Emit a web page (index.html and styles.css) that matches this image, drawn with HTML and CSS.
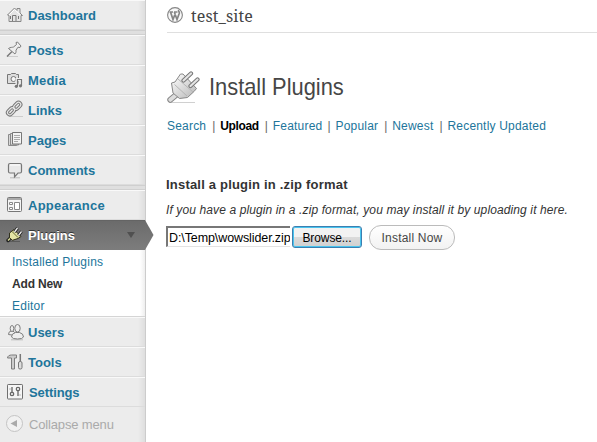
FILE: index.html
```html
<!DOCTYPE html>
<html lang="en">
<head>
<meta charset="utf-8">
<title>Install Plugins</title>
<link rel="stylesheet" href="styles.css">
</head>
<body>
<div class="layout">
  <nav class="sidebar">
    <a class="item"><svg class="icon" viewBox="0 0 28 30"><path d="M7.500 15 14.500 8l2.500 2.500V8.500h3v4.500l2.500 2.500H21V21.500H9V15.500z" fill="#e4e4e4" stroke="#888"/><path d="M9 15l5.500-5.500 6 5.500" fill="none" stroke="#fff"/><path d="M12.500 21v-5.500h3.500V21M18.500 16v3M10.500 16v3" fill="none" stroke="#777"/></svg><span>Dashboard</span></a>
    <div class="separator"></div>
    <a class="item"><svg class="icon" viewBox="0 0 28 30"><path d="M7 21.500h11" stroke="#ccc"/><path d="M7 21.500 12 16.500" stroke="#777" stroke-width="1.500"/><path d="M8.500 13.500c2-1.500 4-1 5-1.500l3-2.500-.5-2 1.500-.5 3.500 4-1 1.500-2-.3-2 3c.3 2-.5 3.500-1 3.800z" fill="#eee" stroke="#7d7d7d"/></svg><span>Posts</span></a>
    <a class="item media"><svg class="icon" viewBox="0 0 28 30"><path d="M7.500 9.500h3l1-1h4l1 1h2v9h-11z" fill="#ddd" stroke="#777"/><circle cx="13.500" cy="14" r="2.500" fill="#f6f6f6" stroke="#777"/><path d="M17 21.500V14.500h4.500v6.500" fill="none" stroke="#efefef" stroke-width="3"/><path d="M17.500 21.500V14.500h4v6.500" fill="none" stroke="#777" stroke-width="1.200"/><circle cx="16.300" cy="21.300" r="1.600" fill="#777"/><circle cx="20.500" cy="20.800" r="1.600" fill="#777"/></svg><span>Media</span></a>
    <a class="item"><svg class="icon" viewBox="0 0 28 30"><path d="M10 21.500h13" stroke="#ccc"/><g fill="none" stroke="#777" stroke-width="3.200"><rect x="-4" y="-2.300" width="8" height="4.600" rx="2.300" transform="translate(17.300 10.800) rotate(-45)"/><rect x="-4" y="-2.300" width="8" height="4.600" rx="2.300" transform="translate(11 16.300) rotate(-45)"/></g><g fill="none" stroke="#e6e6e6" stroke-width="1.200"><rect x="-4" y="-2.300" width="8" height="4.600" rx="2.300" transform="translate(17.300 10.800) rotate(-45)"/><rect x="-4" y="-2.300" width="8" height="4.600" rx="2.300" transform="translate(11 16.300) rotate(-45)"/></g></svg><span>Links</span></a>
    <a class="item"><svg class="icon" viewBox="0 0 28 30"><path d="M8.500 9.500h8v11h-8z" fill="#d8d8d8" stroke="#8a8a8a"/><path d="M10.500 8.500h8v11.500h-8z" fill="#ddd" stroke="#8a8a8a"/><path d="M12.500 7.500h9v11.500h-9z" fill="#f4f4f4" stroke="#777"/><path d="M14 10.500h6M14 12.500h6M14 14.500h6M14 16.500h4" stroke="#aaa"/></svg><span>Pages</span></a>
    <a class="item"><svg class="icon" viewBox="0 0 28 30"><path d="M10 22.800h10" stroke="#bbb"/><path d="M10 8.500h10q1.500 0 1.500 1.500v6.500q0 1.500-1.500 1.500h-2l-3.500 4v-4H10q-1.500 0-1.500-1.500V10q0-1.500 1.500-1.500z" fill="#e9e9e9" stroke="#777" stroke-width="1.200"/><path d="M10 10h10" stroke="#fff"/></svg><span>Comments</span></a>
    <div class="separator"></div>
    <a class="item appearance"><svg class="icon" viewBox="0 0 28 30"><rect x="7.500" y="7.500" width="14" height="14" rx="1" fill="#f5f5f5" stroke="#777"/><path d="M8 9h13" stroke="#aaa" stroke-width="2"/><path d="M9.500 12.500h3v2h-3zM9.500 17.500h3v2h-3zM14.500 12.500h5v7h-5z" fill="#fff" stroke="#888"/></svg><span>Appearance</span></a>
    <a class="item current"><svg class="icon" viewBox="0 0 28 30"><path d="M7 21.500h13" stroke="#5b5b5b"/><path d="M8 20.500 10.500 18" stroke="#222" stroke-width="3.500" stroke-linecap="round"/><path d="M8 20.500 11 17.500" stroke="#dde09a" stroke-width="1.500"/><path d="M9.500 13 14 9.500l7 7-3 2-5.500 1.800-3-2.500z" fill="#e4e6a5" stroke="#30301c"/><path d="M12 11.500 18 17.500" stroke="#666a35"/><path d="M14.500 12 17.500 8M18.500 15.500 21.500 11.500" stroke="#222" stroke-width="3"/><path d="M14.500 12 17.500 8M18.500 15.500 21.500 11.500" stroke="#eee" stroke-width="1.300"/></svg><span>Plugins</span><i class="toggle"></i><svg class="pointer" viewBox="0 0 9 30"><defs><linearGradient id="pg" x1="0" y1="0" x2="0" y2="1"><stop stop-color="#6b6b6b"/><stop offset="1" stop-color="#7c7c7c"/></linearGradient></defs><path d="M0 0 8.500 15 0 30z" fill="url(#pg)"/></svg></a>
    <div class="submenu"><a>Installed Plugins</a><a class="active">Add New</a><a class="editor">Editor</a></div>
    <a class="item"><svg class="icon" viewBox="0 0 28 30"><path d="M11 22.800h12" stroke="#bbb"/><g fill="#eee" stroke="#7d7d7d"><path d="M8.500 17.500q0-3 2.500-3.500h2q2.500 1 2 4.500z"/><ellipse cx="12" cy="11.500" rx="1.800" ry="3"/><ellipse cx="17.500" cy="11.300" rx="2.700" ry="3.800"/><path d="M11.500 20q0-3.500 4-4.500h4q4 1 4 4.500-1 2-6 2t-6-2z"/></g></svg><span>Users</span></a>
    <a class="item"><svg class="icon" viewBox="0 0 28 30"><path d="M7.500 11c0-2 2-3 4-3h5v3h-2v11h-3V11H9z" fill="#ccc" stroke="#7d7d7d"/><path d="M20.300 7v8" stroke="#777" stroke-width="1.500"/><rect x="18.500" y="14.500" width="3.500" height="7.500" rx="1.500" fill="#ddd" stroke="#777"/></svg><span>Tools</span></a>
    <a class="item settings"><svg class="icon" viewBox="0 0 28 30"><rect x="7.500" y="7.500" width="15" height="14.500" rx=".7" fill="#f5f5f5" stroke="#6f6f6f"/><path d="M12 10v5M18 13v6" stroke="#777" stroke-width="1.500"/><circle cx="12" cy="17" r="1.700" fill="none" stroke="#666" stroke-width="1.300"/><circle cx="18" cy="12" r="1.700" fill="#fff" stroke="#666" stroke-width="1.300"/><path d="M10 11v2M20 17v2" stroke="#bbb"/></svg><span>Settings</span></a>
    <a class="collapse"><svg class="icon" viewBox="0 0 28 30"><circle cx="14.500" cy="16.500" r="8" fill="#f1f1f1" stroke="#c4c4c4"/><path d="M10.500 16.500 17 13v7z" fill="#aaa"/></svg><span>Collapse menu</span></a>
  </nav>
  <main class="main">
    <header class="site"><svg class="wp" viewBox="0 0 16 16"><circle cx="8" cy="8" r="7.400" fill="#f8f8f8" stroke="#858585" stroke-width="1.100"/><path d="M2.500 5h3.500M7 5h3.500M3.500 5 6 12.500 8.300 6.500M7.300 5l2.700 7.500 2.300-6.300c.4-1.600-1.300-2-.6-3.200" fill="none" stroke="#858585" stroke-width="1.700"/></svg><span>test_site</span></header>
    <div class="title">
      <svg class="plug" viewBox="0 0 34 34"><defs><linearGradient id="g" x1="0" y1="0" x2="1" y2="1"><stop stop-color="#fff"/><stop offset="1" stop-color="#b5b5b5"/></linearGradient></defs><path d="M4 31.500h24" stroke="#d0d0d0"/><path d="M3.300 28.800 9 24" stroke="#888" stroke-width="6" stroke-linecap="round"/><path d="M3.300 28.800 9 24" stroke="#ddd" stroke-width="4" stroke-linecap="round"/><path d="M4.500 12 8 11 13.500 3 16 3 29.500 17.500 27 20.500 20.500 26.500 12.500 27.500 6 22z" fill="url(#g)" stroke="#888"/><path d="M7.500 13.500 20 25M11 8 26 21" fill="none" stroke="#b5b5b5"/><path d="M16.500 9.500 24 2.500M23.500 15 30.500 8.500" stroke="#777" stroke-width="4.200" stroke-linecap="round"/><path d="M16.500 9.500 24 2.500M23.500 15 30.500 8.500" stroke="#e4e4e4" stroke-width="2.200" stroke-linecap="round"/></svg>
      <h1>Install Plugins</h1>
    </div>
    <div class="tabs"><a class="t1">Search</a><i>|</i><a class="t2">Upload</a><i>|</i><a class="t3">Featured</a><i>|</i><a class="t4">Popular</a><i>|</i><a class="t5">Newest</a><i>|</i><a class="t6">Recently Updated</a></div>
    <h2>Install a plugin in .zip format</h2>
    <p>If you have a plugin in a .zip format, you may install it by uploading it here.</p>
    <div class="upload"><div class="file">D:\Temp\wowslider.zip</div><div class="browse">Browse...</div><div class="install">Install Now</div></div>
  </main>
</div>
</body>
</html>
```
FILE: styles.css
```css
* { box-sizing: border-box; }
body { margin: 0; background: #fff; font-family: "Liberation Sans", Arial, sans-serif; color: #333; overflow: hidden; }
.layout { display: flex; height: 442px; }
.sidebar { width: 146px; flex: none; background: linear-gradient(to right, #ececec 138px, #dedede 145px); border-right: 1px solid #ccc; display: flex; flex-direction: column; }
.item { position: relative; display: flex; align-items: center; height: 30px; flex: none; border-top: 1px solid #f9f9f9; border-bottom: 1px solid #dcdcdc; color: #21759b; font-size: 13px; font-weight: bold; white-space: nowrap; }
.icon { width: 28px; height: 30px; flex: none; margin: -1px 0; }
.item span { line-height: 28px; padding-top: 1px; }
.media span { letter-spacing: .2px; }
.appearance span { letter-spacing: .25px; }
.settings span { padding-left: 1px; letter-spacing: -.1px; }
.separator { height: 5px; flex: none; background: #dfdfdf; border-top: 1px solid #cfcfcf; border-bottom: 1px solid #d0d0d0; }
.current { color: #fff; background: linear-gradient(#6b6b6b, #7c7c7c); border-top-color: #646464; border-bottom-color: #7c7c7c; text-shadow: 0 -1px 0 #333; }
.toggle { margin-left: auto; margin-right: 10px; border: 4px solid transparent; border-top: 6px solid #505050; border-bottom: 0; }
.pointer { position: absolute; left: 145px; top: -1px; width: 9px; height: 30px; }
.submenu { height: 67px; flex: none; background: linear-gradient(to right, #fff 140px, #eee 145px); border-bottom: 1px solid #d5d5d5; display: flex; flex-direction: column; padding: 1px 0 0 12px; font-size: 12px; line-height: 22px; }
.submenu a { color: #21759b; letter-spacing: .23px; }
.submenu .active { color: #333; font-weight: bold; letter-spacing: -.15px; }
.collapse { display: flex; height: 35px; align-items: flex-start; font-size: 13px; color: #aaa; padding-top: 1px; }
.collapse span { line-height: 34px; padding-left: 1px; letter-spacing: -.15px; }
.main { flex: 1; padding-left: 20px; }
.site { display: flex; height: 33px; margin-left: 1px; border-bottom: 1px solid #dfdfdf; font: 16px/32px "Noto Serif", "DejaVu Serif", serif; letter-spacing: .1px; color: #464646; }
.wp { width: 16px; height: 16px; margin: 7px 8px 0 0; }
.title { display: flex; height: 72px; padding-top: 38px; }
.plug { width: 34px; height: 34px; margin-left: 1px; flex: none; }
h1 { margin: 0 0 0 8px; font-size: 24px; line-height: 32px; font-weight: normal; color: #464646; white-space: nowrap; transform: scaleX(.91); transform-origin: 0 0; }
.tabs { display: flex; height: 43px; margin: 9px 0 0 1px; font-size: 12px; line-height: 25px; color: #666; white-space: nowrap; }
.tabs a { color: #21759b; letter-spacing: .2px; }
.tabs i { font-style: normal; width: 3px; margin: 0 5px; }
.tabs .t1 { margin-right: 1px; }
.tabs .t2 { color: #000; font-weight: bold; letter-spacing: -.35px; margin-right: 1px; }
.tabs .t4 { margin-right: 1px; }
.tabs .t5 { margin-right: 1px; }
h2 { margin: 18px 0 0; font-size: 13px; line-height: 20px; color: #333; white-space: nowrap; letter-spacing: .2px; }
p { margin: 5px 0 0; font-size: 12px; line-height: 20px; font-style: italic; white-space: nowrap; letter-spacing: .115px; }
.upload { display: flex; margin: 6px 0 0; }
.file { width: 124px; height: 21px; border: 1px solid #e3e3e3; border-top: 2px solid #777; border-left: 2px solid #777; border-right: 0; padding-left: 1px; font-size: 12.5px; line-height: 21px; letter-spacing: -.1px; color: #000; overflow: hidden; white-space: nowrap; }
.browse { width: 70px; height: 22px; margin-left: 2px; border: 1px solid #3c7fb1; border-radius: 3px; box-shadow: inset 0 0 0 1px #48c4ee; background: linear-gradient(#f2f2f2 50%, #dbdbdb 50%, #d0d0d0); color: #000; font-size: 12px; line-height: 23px; letter-spacing: -.1px; text-align: center; }
.install { width: 86px; height: 25px; margin: -1px 0 0 7px; border: 1px solid #bbb; border-radius: 12px; background: linear-gradient(#fff, #f2f2f2); color: #464646; font-size: 12px; line-height: 25px; letter-spacing: .2px; text-align: center; }
```
